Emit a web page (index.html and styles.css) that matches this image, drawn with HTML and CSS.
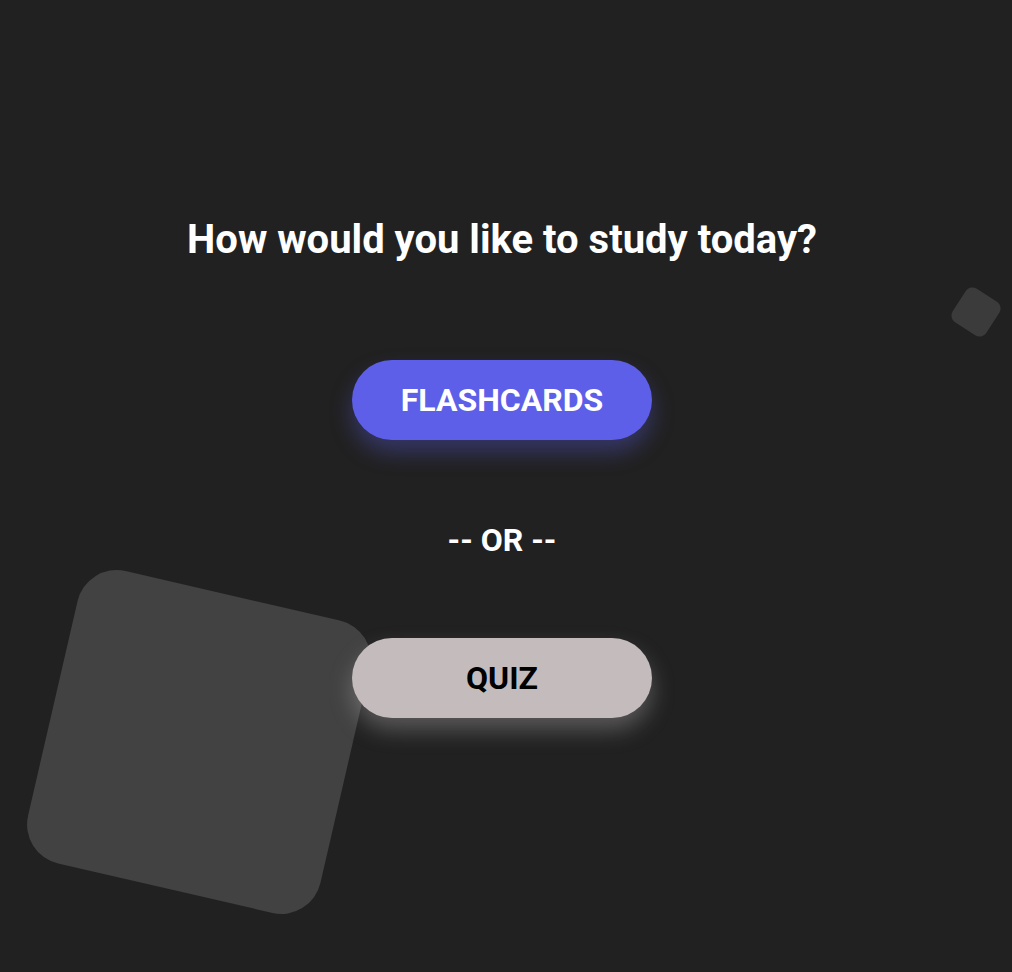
FILE: index.html
```html
<!DOCTYPE html>
<html lang="en">
<head>
<meta charset="utf-8">
<title>Study</title>
<link rel="stylesheet" href="styles.css">
</head>
<body>
<div class="shape shape-big"></div>
<div class="shape shape-small"></div>
<main class="chooser">
  <h1 class="title">How would you like to study today?</h1>
  <button class="btn btn-flash">FLASHCARDS</button>
  <p class="or">-- OR --</p>
  <button class="btn btn-quiz">QUIZ</button>
</main>
</body>
</html>
```
FILE: styles.css
```css
html, body {
  margin: 0;
  padding: 0;
  height: 100%;
}
body {
  background: #212121;
  font-family: Roboto, "Noto Sans", sans-serif;
  color: #fff;
  position: relative;
  overflow: hidden;
}
.shape {
  position: absolute;
  background: #424242;
  z-index: 0;
}
.shape-big {
  left: 49px;
  top: 592px;
  width: 300px;
  height: 300px;
  border-radius: 40px;
  transform: rotate(13deg);
}
.shape-small {
  left: 956px;
  top: 292px;
  width: 40px;
  height: 40px;
  border-radius: 8px;
  background: #3b3b3b;
  transform: rotate(33deg);
}
.chooser {
  position: relative;
  z-index: 1;
  display: flex;
  flex-direction: column;
  align-items: center;
  padding-top: 216px;
  padding-right: 8px;
}
.title {
  margin: 0;
  font-size: 40px;
  line-height: 48px;
  font-weight: 700;
}
.btn {
  width: 300px;
  height: 80px;
  border: none;
  border-radius: 40px;
  font-family: Roboto, "Noto Sans", sans-serif;
  font-size: 32px;
  font-weight: 700;
  cursor: pointer;
}
.btn-flash {
  margin-top: 96px;
  background: #5d5fe8;
  color: #fff;
  box-shadow: 0 12px 22px rgba(93, 95, 232, 0.35);
}
.or {
  margin: 82px 0 0;
  font-size: 32px;
  line-height: 36px;
  font-weight: 700;
}
.btn-quiz {
  margin-top: 80px;
  background: #c4bcbc;
  color: #000;
  box-shadow: 0 12px 22px rgba(196, 188, 188, 0.35);
}
```
